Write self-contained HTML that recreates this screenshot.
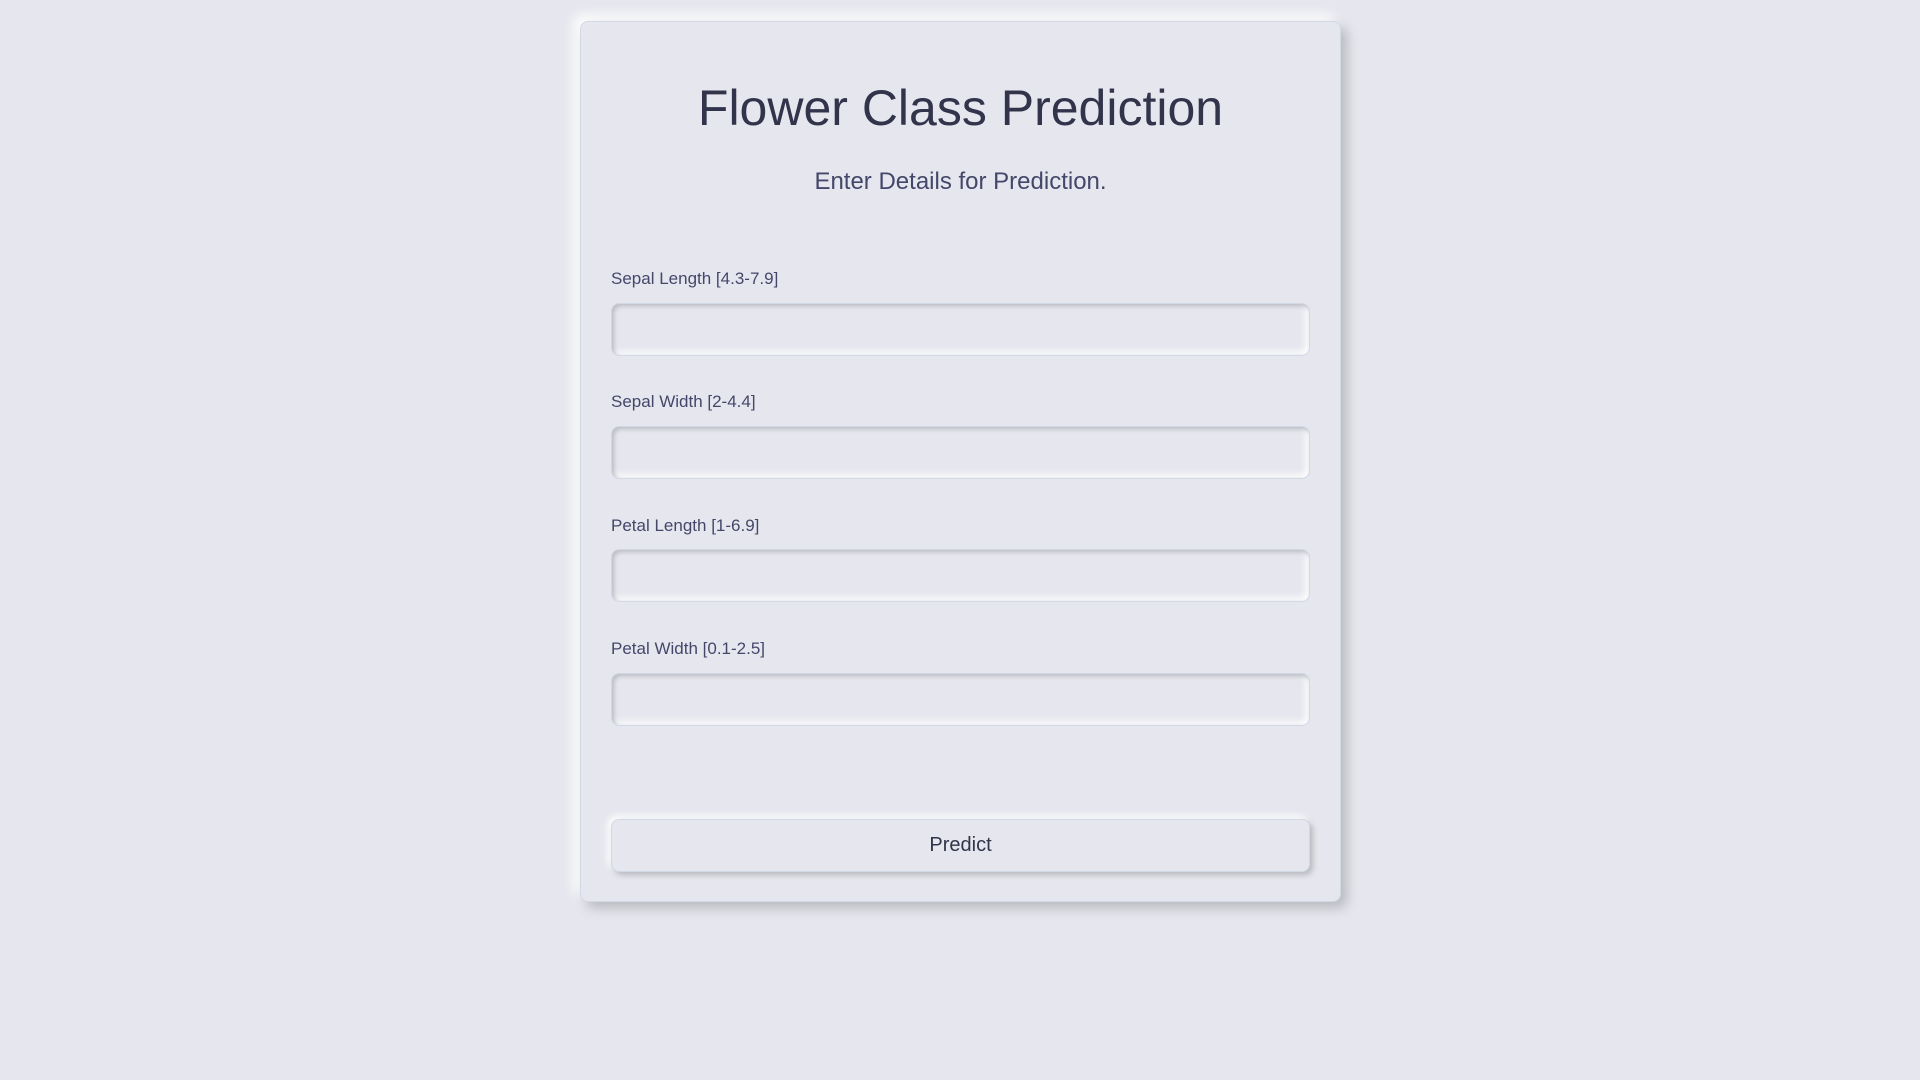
<!DOCTYPE html>
<html><head><meta charset="utf-8"><style>
html,body{margin:0;padding:0;background:#e6e7ee;width:1920px;height:1080px;overflow:hidden;font-family:"Liberation Sans",sans-serif;}
.card{position:absolute;left:580px;top:21px;width:761px;height:881px;box-sizing:border-box;border-radius:8px;background:#e6e7ee;box-shadow:6px 6px 12px #b8b9be,-6px -6px 12px #ffffff;border:1px solid #d1d9e6;}
h1{position:absolute;left:0;right:0;top:57px;margin:0;text-align:center;font-weight:400;font-size:50px;color:#31344b;}
.sub{position:absolute;left:0;right:0;top:146px;text-align:center;font-size:24px;color:#44476a;}
.lab{position:absolute;left:30px;font-size:17px;color:#44476a;}
.inp{position:absolute;left:30px;width:699px;height:53px;box-sizing:border-box;border-radius:8px;border:1px solid #d1d9e6;background:#e6e7ee;box-shadow:inset 2px 2px 5px #b8b9be,inset -3px -3px 7px #ffffff;}
.btn{position:absolute;left:30px;top:797px;width:699px;height:53px;box-sizing:border-box;border-radius:8px;border:1px solid #d1d9e6;background:#e6e7ee;box-shadow:3px 3px 6px #b8b9be,-3px -3px 7px #ffffff;text-align:center;line-height:51px;font-size:20px;color:#31344b;}
</style></head><body>
<div class="card">
<h1>Flower Class Prediction</h1>
<div class="sub">Enter Details for Prediction.</div>
<div class="lab" style="top:247px">Sepal Length [4.3-7.9]</div>
<div class="inp" style="top:281px"></div>
<div class="lab" style="top:370px">Sepal Width [2-4.4]</div>
<div class="inp" style="top:404px"></div>
<div class="lab" style="top:494px">Petal Length [1-6.9]</div>
<div class="inp" style="top:527px"></div>
<div class="lab" style="top:617px">Petal Width [0.1-2.5]</div>
<div class="inp" style="top:651px"></div>
<div class="btn">Predict</div>
</div>
</body></html>
